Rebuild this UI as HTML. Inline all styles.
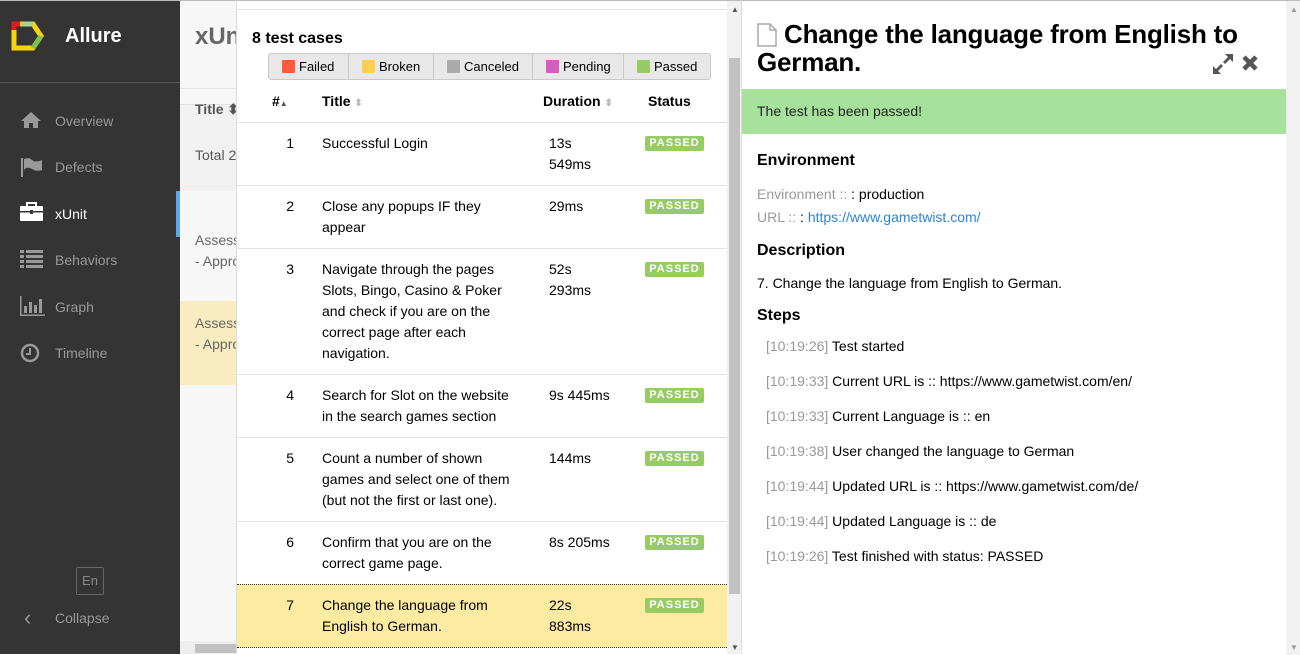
<!DOCTYPE html>
<html><head><meta charset="utf-8"><style>
*{box-sizing:border-box;margin:0;padding:0}
body{width:1300px;height:654px;overflow:hidden;font-family:"Liberation Sans",sans-serif;font-size:14px;color:#000;background:#fff;position:relative}
.a{position:absolute;white-space:nowrap}
.side{left:0;top:0;width:180px;height:654px;background:#343434;border-top:1px solid #bbb}
.nav{position:absolute;left:55px;font-size:14px;color:#999}
.mid{left:180px;top:0;width:56px;height:654px;background:#f7f7f7;border-top:1px solid #bbb;overflow:hidden}
.list{left:236px;top:0;width:505px;height:654px;background:#fff;border-top:1px solid #bbb;border-left:1px solid #ddd;overflow:hidden}
.row{position:absolute;left:0;width:490px;border-top:1px solid #e5e5e5;line-height:21px;font-size:14px;white-space:normal}
.row .n{position:absolute;left:0;width:57px;text-align:right;top:10px}
.row .t{position:absolute;left:85px;width:200px;top:10px}
.row .d{position:absolute;left:312px;width:80px;top:10px}
.badge{position:absolute;left:408px;top:13px;width:59px;height:15px;background:#97cc64;border-radius:2px;color:#fff;font-size:11px;font-weight:bold;letter-spacing:1px;text-align:center;line-height:15px}
.fb{position:absolute;top:52px;height:27px;background:#e8e8e8;border:1px solid #c8c8c8;font-size:13px;line-height:25px;padding-left:13px}
.fb i{display:inline-block;width:13px;height:13px;vertical-align:-2px;margin-right:4px;border-radius:1px}
.right{left:741px;top:0;width:559px;height:654px;background:#fff;border-top:1px solid #bbb;border-left:1px solid #ddd}
.step{position:absolute;left:766px;font-size:14px}
.step span{color:#999}
</style></head><body>
<div class="a side">
 <svg class="a" style="left:11px;top:20px" width="34" height="30" viewBox="0 0 34 30">
  <path d="M3 3H22L30 15L22 27H3Z" fill="none" stroke="#f5d40f" stroke-width="5"/>
  <path d="M3 3H9" stroke="#e21b1b" stroke-width="5"/><path d="M3 0.5V9" stroke="#e21b1b" stroke-width="5"/>
  <path d="M11 3H22" stroke="#a9d48f" stroke-width="5"/>
  <path d="M22 27L30 15" stroke="#7fc24a" stroke-width="5"/>
 </svg>
 <div class="a" style="left:65px;top:24px;color:#fff;font-size:20px;font-weight:bold">Allure</div>
 <div class="a" style="left:0;top:81px;width:180px;height:1px;background:#555"></div>
 <svg class="a" style="left:20px;top:110px" width="22" height="18" viewBox="0 0 22 18"><path d="M11 1L1 10H4V17H9V12H13V17H18V10H21Z" fill="#999"/></svg>
 <div class="nav" style="top:112px">Overview</div>
 <svg class="a" style="left:20px;top:156px" width="22" height="20" viewBox="0 0 22 20"><rect x="1" y="1" width="2" height="19" fill="#999"/><path d="M4 2Q9 0 12 3T22 3V13Q17 15 12 12T4 13Z" fill="#999"/></svg>
 <div class="nav" style="top:158px">Defects</div>
 <svg class="a" style="left:20px;top:201px" width="23" height="19" viewBox="0 0 23 19"><rect x="7" y="1" width="9" height="4" fill="none" stroke="#fff" stroke-width="2"/><rect x="0" y="4" width="23" height="15" rx="1" fill="#fff"/><rect x="0" y="9" width="23" height="1.5" fill="#343434"/><rect x="10" y="8" width="3" height="4" fill="#343434"/></svg>
 <div class="nav" style="top:205px;color:#fff">xUnit</div>
 <div class="a" style="left:176px;top:190px;width:4px;height:46px;background:#5fa8e8"></div>
 <svg class="a" style="left:20px;top:248px" width="23" height="20" viewBox="0 0 23 20"><g fill="#999"><rect x="0" y="1" width="4" height="3"/><rect x="6" y="1" width="17" height="3"/><rect x="0" y="6" width="4" height="3"/><rect x="6" y="6" width="17" height="3"/><rect x="0" y="11" width="4" height="3"/><rect x="6" y="11" width="17" height="3"/><rect x="0" y="16" width="4" height="3"/><rect x="6" y="16" width="17" height="3"/></g></svg>
 <div class="nav" style="top:251px">Behaviors</div>
 <svg class="a" style="left:20px;top:295px" width="25" height="20" viewBox="0 0 25 20"><g fill="#999"><rect x="0" y="0" width="1.5" height="20"/><rect x="0" y="18.5" width="25" height="1.5"/><rect x="4" y="10" width="3" height="7"/><rect x="9" y="6" width="3" height="11"/><rect x="14" y="9" width="3" height="8"/><rect x="19" y="3" width="3" height="14"/></g></svg>
 <div class="nav" style="top:298px">Graph</div>
 <svg class="a" style="left:20px;top:342px" width="20" height="20" viewBox="0 0 20 20"><circle cx="10" cy="10" r="8" fill="none" stroke="#999" stroke-width="2.5"/><path d="M10 5V11H6" fill="none" stroke="#999" stroke-width="2"/></svg>
 <div class="nav" style="top:344px">Timeline</div>
 <div class="a" style="left:76px;top:566px;width:28px;height:28px;border:1px solid #666;border-radius:2px;color:#888;font-size:13px;text-align:center;line-height:26px">En</div>
 <div class="a" style="left:24px;top:604px;color:#999;font-size:22px">‹</div>
 <div class="nav" style="top:609px">Collapse</div>
</div>
<div class="a mid">
 <div class="a" style="left:15px;top:22px;font-size:24px;font-weight:bold;color:#666">xUnit</div>
 <div class="a" style="left:0;top:87px;width:56px;height:1px;background:#e5e5e5"></div>
 <div class="a" style="left:0;top:103px;width:56px;height:87px;background:#f1f1f1;border-top:1px solid #e0e0e0"></div>
 <div class="a" style="left:15px;top:100px;font-weight:bold;color:#555">Title ⬍</div>
 <div class="a" style="left:15px;top:146px;color:#555">Total 2</div>
 <div class="a" style="left:15px;top:229px;color:#666;line-height:21px">Assess<br>- Appro</div>
 <div class="a" style="left:0;top:300px;width:56px;height:84px;background:#f8ecc0"></div>
 <div class="a" style="left:15px;top:312px;color:#666;line-height:21px">Assess<br>- Appro</div>
 <div class="a" style="left:0;top:640px;width:56px;height:14px;background:#eee"></div>
 <div class="a" style="left:15px;top:643px;width:41px;height:9px;background:#c1c1c1"></div>
</div>
<div class="a list">
 <div class="a" style="left:0;top:8px;width:490px;height:1px;background:#e5e5e5"></div>
 <div class="a" style="left:15px;top:29px;font-size:16px;font-weight:bold">8 test cases</div>
 <div class="fb" style="left:31px;width:81px;border-radius:3px 0 0 3px"><i style="background:#fd5a3e"></i>Failed</div>
 <div class="fb" style="left:111px;width:86px"><i style="background:#ffd050"></i>Broken</div>
 <div class="fb" style="left:196px;width:100px"><i style="background:#aaa"></i>Canceled</div>
 <div class="fb" style="left:295px;width:92px"><i style="background:#d35ebe"></i>Pending</div>
 <div class="fb" style="left:386px;width:88px;border-radius:0 3px 3px 0"><i style="background:#97cc64"></i>Passed</div>
 <div class="a" style="left:35px;top:92px;font-weight:bold">#<span style="font-size:8px;color:#555">▲</span></div>
 <div class="a" style="left:85px;top:92px;font-weight:bold">Title <span style="color:#bbb;font-size:10px">⬍</span></div>
 <div class="a" style="left:306px;top:92px;font-weight:bold">Duration <span style="color:#bbb;font-size:10px">⬍</span></div>
 <div class="a" style="left:411px;top:92px;font-weight:bold">Status</div>
 <div class="row" style="top:121px;height:63px"><div class="n">1</div><div class="t">Successful Login</div><div class="d">13s<br>549ms</div><div class="badge">PASSED</div></div>
 <div class="row" style="top:184px;height:63px"><div class="n">2</div><div class="t">Close any popups IF they appear</div><div class="d">29ms</div><div class="badge">PASSED</div></div>
 <div class="row" style="top:247px;height:126px"><div class="n">3</div><div class="t">Navigate through the pages Slots, Bingo, Casino &amp; Poker and check if you are on the correct page after each navigation.</div><div class="d">52s<br>293ms</div><div class="badge">PASSED</div></div>
 <div class="row" style="top:373px;height:63px"><div class="n">4</div><div class="t">Search for Slot on the website in the search games section</div><div class="d">9s 445ms</div><div class="badge">PASSED</div></div>
 <div class="row" style="top:436px;height:84px"><div class="n">5</div><div class="t">Count a number of shown games and select one of them (but not the first or last one).</div><div class="d">144ms</div><div class="badge">PASSED</div></div>
 <div class="row" style="top:520px;height:63px"><div class="n">6</div><div class="t">Confirm that you are on the correct game page.</div><div class="d">8s 205ms</div><div class="badge">PASSED</div></div>
 <div class="row" style="top:583px;height:64px;background:#feeba2;border-top:1px dotted #333;border-bottom:1px dotted #333"><div class="n">7</div><div class="t">Change the language from English to German.</div><div class="d">22s<br>883ms</div><div class="badge">PASSED</div></div>
 <div class="a" style="left:490px;top:0;width:15px;height:654px;background:#f1f1f1"></div>
 <div class="a" style="left:492px;top:57px;width:11px;height:536px;background:#c1c1c1"></div>
 <div class="a" style="left:494px;top:4px;font-size:8px;color:#555">▲</div>
 <div class="a" style="left:494px;top:642px;font-size:8px;color:#555">▼</div>
</div>
<div class="a right">
 <svg class="a" style="left:15px;top:22px" width="20" height="24" viewBox="0 0 20 24"><path d="M1 1H13L19 7V23H1Z" fill="#fff" stroke="#aaa" stroke-width="1.5"/><path d="M13 1V7H19" fill="none" stroke="#aaa" stroke-width="1.5"/></svg>
 <div class="a" style="left:15px;top:19px;width:520px;white-space:normal;font-size:26px;font-weight:bold;line-height:28px;text-indent:27px;letter-spacing:-0.2px">Change the language from English to German.</div>
 <svg class="a" style="left:470px;top:52px" width="22" height="22" viewBox="0 0 22 22"><g fill="#555"><path d="M13 1H21V9L18 6L13 11L11 9L16 4Z"/><path d="M9 21H1V13L4 16L9 11L11 13L6 18Z"/></g></svg>
 <svg class="a" style="left:499px;top:53px" width="18" height="18" viewBox="0 0 18 18"><path d="M3 3L15 15M15 3L3 15" stroke="#555" stroke-width="4.5"/></svg>
 <div class="a" style="left:0;top:88px;width:544px;height:45px;background:#a6e29c;padding:14px 15px;font-size:14px;color:#222">The test has been passed!</div>
 <div class="a" style="left:15px;top:151px;font-size:16px;font-weight:bold">Environment</div>
 <div class="a" style="left:15px;top:182px;line-height:23px"><span style="color:#999">Environment :: </span>: production<br><span style="color:#999">URL :: </span>: <span style="color:#2a84d8">https://www.gametwist.com/</span></div>
 <div class="a" style="left:15px;top:241px;font-size:16px;font-weight:bold">Description</div>
 <div class="a" style="left:15px;top:274px">7. Change the language from English to German.</div>
 <div class="a" style="left:15px;top:306px;font-size:16px;font-weight:bold">Steps</div>
 <div class="a" style="left:544px;top:0;width:15px;height:654px;background:#f1f1f1"></div>
 <div class="a" style="left:548px;top:4px;font-size:8px;color:#999">▲</div>
 <div class="a" style="left:548px;top:642px;font-size:8px;color:#999">▼</div>
</div>
<div class="step" style="top:338px"><span>[10:19:26]</span> Test started</div>
<div class="step" style="top:373px"><span>[10:19:33]</span> Current URL is :: https://www.gametwist.com/en/</div>
<div class="step" style="top:408px"><span>[10:19:33]</span> Current Language is :: en</div>
<div class="step" style="top:443px"><span>[10:19:38]</span> User changed the language to German</div>
<div class="step" style="top:478px"><span>[10:19:44]</span> Updated URL is :: https://www.gametwist.com/de/</div>
<div class="step" style="top:513px"><span>[10:19:44]</span> Updated Language is :: de</div>
<div class="step" style="top:548px"><span>[10:19:26]</span> Test finished with status: PASSED</div>
</body></html>
